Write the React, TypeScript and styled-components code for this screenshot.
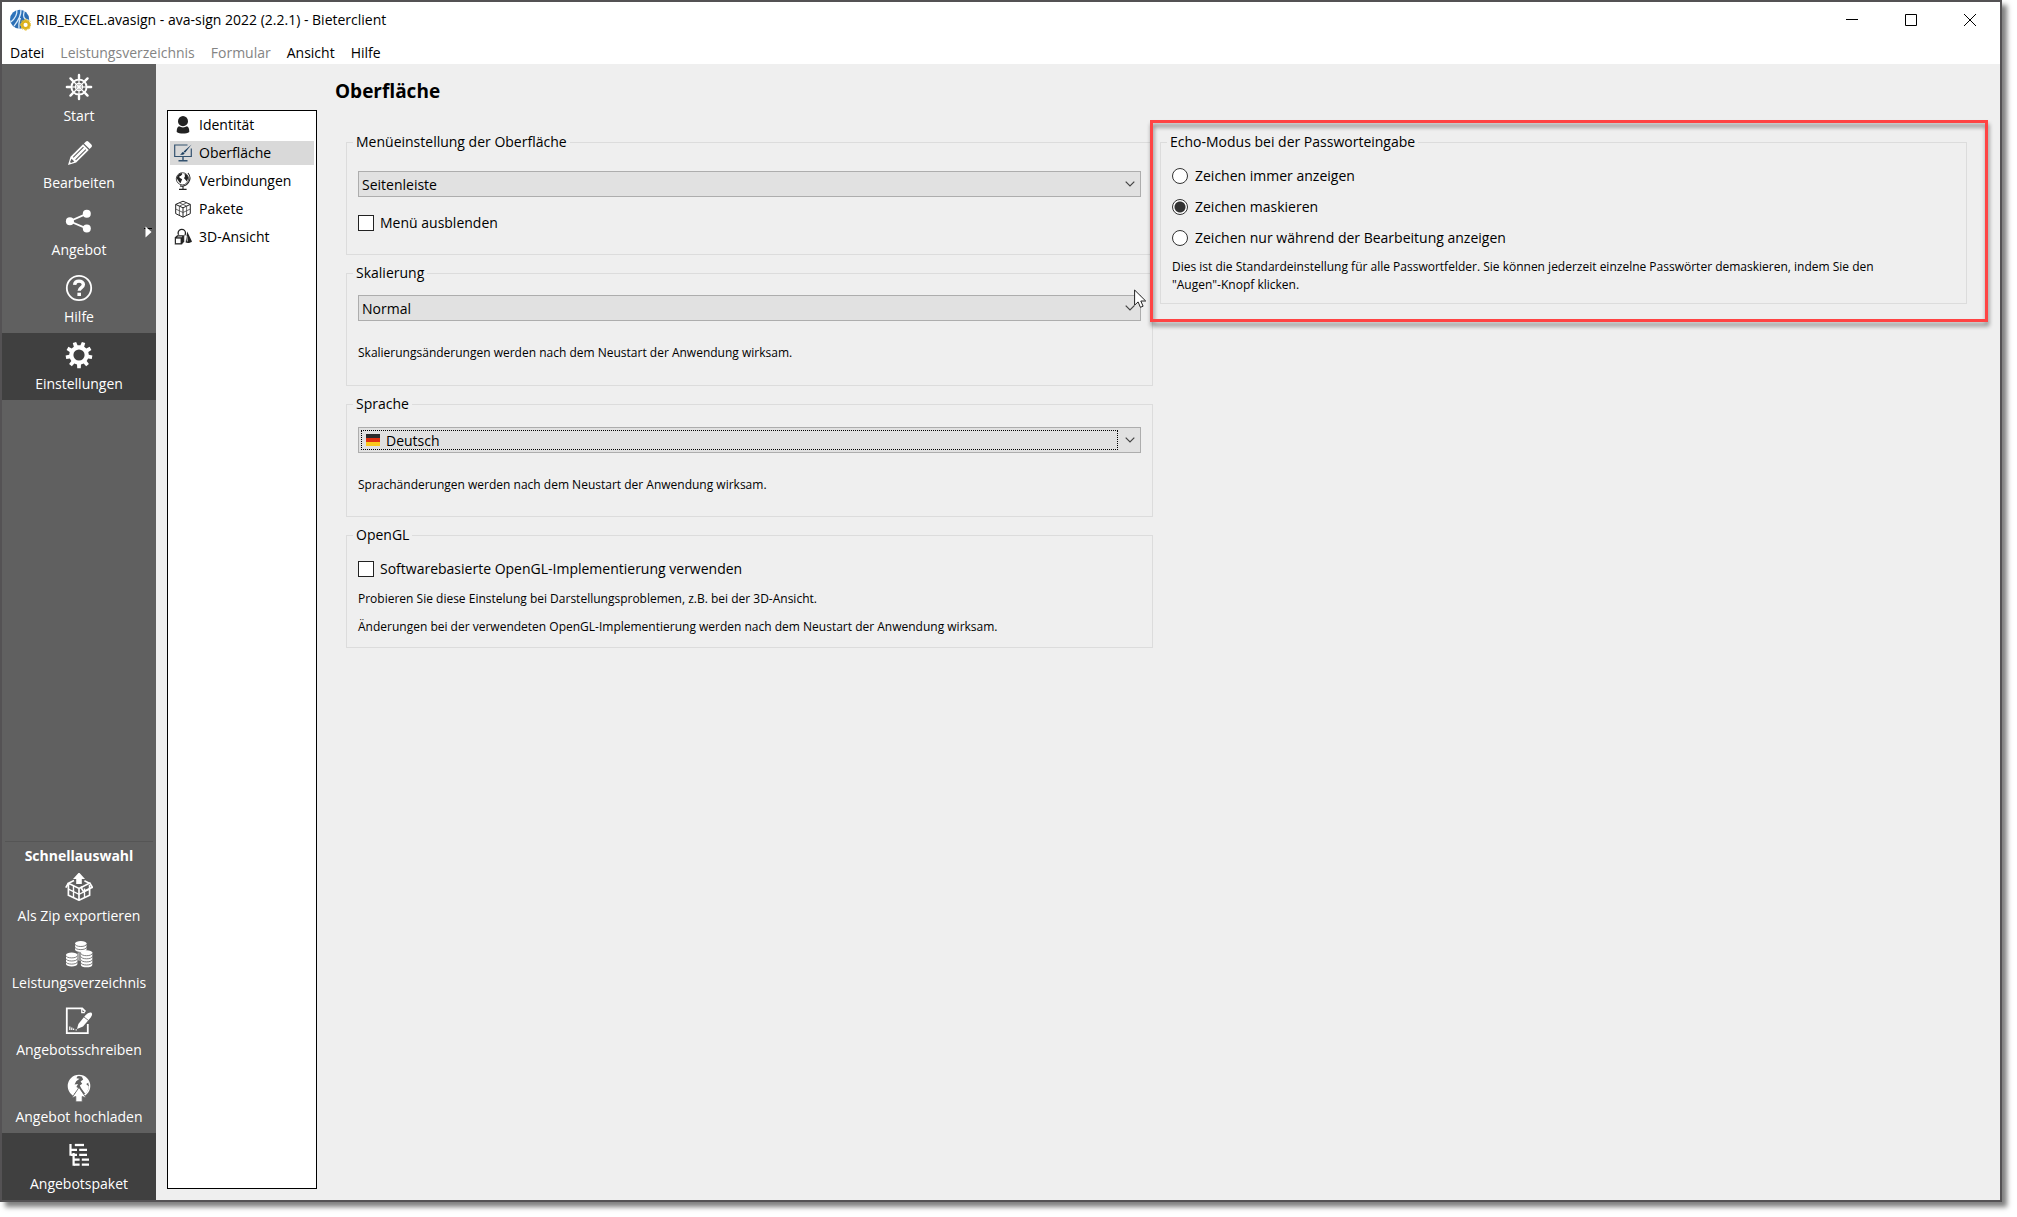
import React from "react";
import styled, { createGlobalStyle } from "styled-components";

const GlobalStyle = createGlobalStyle`
  *, *::before, *::after { box-sizing: border-box; }
  body { margin: 0; background: #fff; }
  body, button, select, input {
    font-family: "Open Sans", "Noto Sans", sans-serif;
    font-size: 14px;
    line-height: 22px;
    color: #000;
  }
`;

const Window = styled.div`
  display: flex;
  flex-direction: column;
  min-height: calc(100vh - 15px);
  margin: 0 15px 15px 0;
  border: 2px solid #545254;
  background: #efefef;
  box-shadow: 5px 5px 5px rgba(0, 0, 0, 0.5);
`;

const TitleBar = styled.header`
  display: flex;
  align-items: center;
  height: 36px;
  padding: 0 1px 0 8px;
  background: #fff;
`;

const Title = styled.h1`
  flex: 1;
  margin: 0 0 0 5px;
  font-size: 14px;
  font-weight: 400;
`;

const WindowButton = styled.button`
  display: grid;
  place-items: center;
  width: 59px;
  height: 36px;
  padding: 0;
  border: 0;
  background: none;
`;

const MenuBar = styled.nav`
  display: flex;
  align-items: flex-end;
  gap: 16px;
  height: 26px;
  padding-left: 8px;
  background: #fff;
`;

const MenuButton = styled.button`
  padding: 0;
  border: 0;
  background: none;
  &:disabled { color: #848484; }
`;

const Body = styled.div`
  flex: 1;
  display: flex;
`;

const Sidebar = styled.nav`
  display: flex;
  flex-direction: column;
  flex: none;
  width: 154px;
  padding-top: 1px;
  background: #606060;
`;

const SideButton = styled.button<{ $active?: boolean }>`
  position: relative;
  display: flex;
  flex-direction: column;
  align-items: center;
  gap: 4px;
  height: 67px;
  padding: 8px 0 0;
  border: 0;
  color: #fff;
  background: ${(p) => (p.$active ? "#404040" : "transparent")};
  white-space: nowrap;
`;

const Flyout = styled.svg`
  position: absolute;
  right: 3px;
  top: 26px;
`;

const QuickHeading = styled.h2`
  margin: auto 3px 0;
  padding-top: 3px;
  height: 24px;
  border-top: 1px solid #555;
  color: #fff;
  font-size: 14px;
  line-height: 22px;
  font-weight: 700;
  text-align: center;
`;

const PageList = styled.ul`
  flex: none;
  display: flex;
  flex-direction: column;
  gap: 4px;
  width: 150px;
  margin: 46px 0 11px 11px;
  padding: 2px;
  border: 1px solid #000;
  background: #fff;
  list-style: none;
`;

const PageButton = styled.button<{ $active?: boolean }>`
  display: flex;
  align-items: center;
  gap: 7px;
  width: 100%;
  height: 24px;
  padding: 0 4px;
  border: 0;
  background: ${(p) => (p.$active ? "#d9d9d9" : "transparent")};
`;

const Content = styled.main`
  flex: 1;
  min-width: 0;
  padding: 14px 33px 0 18px;
`;

const Heading = styled.h2`
  margin: 0 0 27px;
  font-size: 19px;
  line-height: 26px;
  font-weight: 700;
`;

const Columns = styled.div`
  display: grid;
  grid-template-columns: 1fr 1fr;
  gap: 7px;
  align-items: start;
  padding-left: 11px;
`;

const Column = styled.div`
  display: flex;
  flex-direction: column;
  gap: 7px;
`;

const Group = styled.fieldset<{ $top?: number }>`
  min-width: 0;
  min-height: 124px;
  margin: 0;
  padding: ${(p) => p.$top ?? 11}px 11px 9px;
  border: 1px solid #dcdcdc;
`;

const Legend = styled.legend`
  margin-left: -5px;
  padding: 0 3px;
`;

const SelectBox = styled.div`
  position: relative;
`;

const Select = styled.select<{ $withFlag?: boolean }>`
  display: block;
  appearance: none;
  width: 100%;
  height: 26px;
  padding: 1px 24px 0 ${(p) => (p.$withFlag ? 27 : 3)}px;
  border: 1px solid #adadad;
  border-radius: 0;
  background: #e1e1e1;
  outline: 0;
`;

const Chevron = styled.svg`
  position: absolute;
  right: 6px;
  top: 8px;
  pointer-events: none;
`;

const FocusFrame = styled.span`
  position: absolute;
  inset: 3px 23px 3px 3px;
  border: 1px dotted #000;
  pointer-events: none;
`;

const FlagSlot = styled.svg`
  position: absolute;
  left: 8px;
  top: 7px;
  pointer-events: none;
`;

const Pointer = styled.svg`
  position: absolute;
  right: -6px;
  top: -6px;
  pointer-events: none;
`;

const Option = styled.label`
  display: flex;
  align-items: center;
  gap: 6px;
  height: 22px;
`;

const CheckBox = styled.input`
  appearance: none;
  flex: none;
  width: 16px;
  height: 16px;
  margin: 0;
  border: 1px solid #222;
  background: #fff;
`;

const Radio = styled(CheckBox)`
  margin-right: 1px;
  border-color: #333;
  border-radius: 50%;
  &:checked { background: radial-gradient(circle, #333 5px, #fff 6px); }
`;

const ToggleRow = styled.div`
  padding-top: 15px;
`;

const RadioList = styled.div`
  display: flex;
  flex-direction: column;
  gap: 9px;
`;

const Note = styled.p<{ $gap: number }>`
  margin: ${(p) => p.$gap}px 0 0;
  font-size: 12px;
  line-height: 18px;
`;

const NoBreak = styled.span`
  white-space: nowrap;
`;

const Highlighted = styled.div`
  position: relative;
`;

const Marker = styled.div`
  position: absolute;
  inset: -11px -21px -18px -10px;
  border: 3px solid #ff4444;
  filter: drop-shadow(1px 4px 2px rgba(0, 0, 0, 0.45));
  pointer-events: none;
`;

/* ---------- icons ---------- */

const Svg28 = ({ children }: { children: React.ReactNode }) => (
  <svg width="28" height="28" viewBox="0 0 28 28" fill="none" stroke="#fff" strokeWidth="1.6" aria-hidden="true">
    {children}
  </svg>
);

const spokes = Array.from({ length: 8 }, (_, i) => i * 45);

const WheelIcon = () => (
  <Svg28>
    <circle cx="14" cy="14" r="7.6" strokeWidth="2" />
    <circle cx="14" cy="14" r="3.6" strokeWidth="1.2" />
    <circle cx="14" cy="14" r="1.4" fill="#fff" stroke="none" />
    {spokes.map((a) => (
      <g key={a} transform={`rotate(${a} 14 14)`}>
        <path d="M14 13V3" strokeWidth="1.2" />
        <path d="M14 5V1.9" strokeWidth="2.4" strokeLinecap="round" />
      </g>
    ))}
  </Svg28>
);

const PencilIcon = () => (
  <Svg28>
    <g transform="rotate(45 14 14)" stroke="none">
      <path d="M10 .5Q10-1.5 12-1.5h4Q18-1.5 18 .5V3H10z" fill="#fff" />
      <path d="M10 4.2h8V22l-4 7.5L10 22z" fill="#fff" />
      <path d="M12.3 6v14.5M15.7 6v14.5" stroke="#606060" strokeWidth="1" />
      <path d="M12 22.6h4l-1.4 3.4h-1.2z" fill="#606060" />
    </g>
  </Svg28>
);

const ShareIcon = () => (
  <Svg28>
    <path d="M22 6.6 4.7 14.3 22 21.6" strokeWidth="1.8" />
    <g fill="#fff" stroke="none">
      <circle cx="4.9" cy="14.3" r="4" />
      <circle cx="21.8" cy="6.8" r="4" />
      <circle cx="21.8" cy="21.6" r="4" />
    </g>
  </Svg28>
);

const HelpIcon = () => (
  <Svg28>
    <circle cx="14" cy="14" r="12.2" strokeWidth="1.8" />
    <path d="M9.6 10.800c.2-2.400 2-3.700 4.400-3.700s4.400 1.300 4.400 3.500c0 3-4.200 3-4.200 6.200" strokeWidth="3.400" />
    <path d="M14.200 18.700v3.300" strokeWidth="3.600" />
  </Svg28>
);

const gearPath = (teeth: number, c: number, outer: number, root: number, phase: number) => {
  const step = (Math.PI * 2) / teeth;
  const points: string[] = [];
  for (let i = 0; i < teeth; i++) {
    const a = i * step + phase;
    [[-0.29, root], [-0.19, outer], [0.19, outer], [0.29, root]].forEach(([f, r]) => {
      const t = a + f * step;
      points.push(`${(c + r * Math.sin(t)).toFixed(2)} ${(c - r * Math.cos(t)).toFixed(2)}`);
    });
  }
  return `M${points.join("L")}Z`;
};

const GearIcon = () => (
  <Svg28>
    <path
      fill="#fff"
      stroke="none"
      fillRule="evenodd"
      d={`${gearPath(9, 14, 13.4, 9.8, Math.PI / 9)}M14 8.400a5.600 5.600 0 1 0 0 11.200a5.600 5.600 0 1 0 0-11.200Z`}
    />
  </Svg28>
);

const ExportIcon = () => (
  <Svg28>
    <path d="M14-.6 20 6h-3.200v5h-5.600V6H8z" fill="#fff" stroke="none" />
    <path d="M9 7.600 3.400 10.300v11.900L14 27.200l10.600-5V12M14 15.800V27M3.400 10.300 14 15.400l3.500-1.600M19.400 7.800l5 2.500" strokeWidth="1.700" />
    <path d="M3.400 16.200 14 21.300l10.600-5.100M8.500 12.800v11.700M19.500 15.600v9" strokeWidth="1.400" />
    <path d="M3.400 10.300.8 14.600M16 14.500l8.800-4.400 2.600 4.200-9 4.200z" strokeWidth="1.700" />
  </Svg28>
);

const CoinStack = ({ x, y, n }: { x: number; y: number; n: number }) => (
  <g stroke="none">
    <path d={`M${x - 5.7} ${y}v${n * 3.1}a5.700 2.300 0 0 0 11.400 0V${y}z`} fill="#fff" />
    <ellipse cx={x} cy={y} rx="5.7" ry="2.3" fill="#fff" />
    {Array.from({ length: n }, (_, i) => (
      <path
        key={i}
        d={`M${x - 5.7} ${y + 0.8 + i * 3.1}a5.700 2.300 0 0 0 11.400 0`}
        fill="none"
        stroke="#606060"
        strokeWidth="0.8"
      />
    ))}
  </g>
);

const CoinsIcon = () => (
  <Svg28>
    <path d="M13.2 12.500v8M15 12v9" strokeWidth="0.7" />
    <CoinStack x={15.8} y={3.4} n={2} />
    <CoinStack x={6.7} y={14.8} n={3} />
    <CoinStack x={21.6} y={12.6} n={4} />
  </Svg28>
);

const LetterIcon = () => (
  <Svg28>
    <path d="M22.800 17v9.200H1.800V1.300h15.400l3.200 3.300" strokeWidth="1.8" />
    <path d="M16.800 1.500v4.200h3" strokeWidth="1.3" />
    <path d="M12 22l1.400-5L20.500 8.200c1.800-2 4.800-3.600 6-2.400s.4 3-.8 4.600L18 19.400z" fill="#fff" stroke="none" />
    <path d="M18.800 9.900l4.600 3.500" stroke="#606060" strokeWidth="0.8" />
    <path d="M4.800 23v-3.600M6.800 23v-2.400M8.600 23v-1.400M10.600 22.800h1.200" strokeWidth="1.2" />
  </Svg28>
);

const UploadIcon = () => (
  <Svg28>
    <circle cx="14" cy="12" r="10.6" strokeWidth="1.4" />
    <path
      d="M3.700 12C3.600 6.500 7.800 2.300 12.500 1.800l-1 2.400 3 .6-3.300 2.400-1.600 3.400 3.400-.6-1.600 3 2.600 1.400L8 21C5.500 19 3.800 16 3.700 12zM16.500 2c3.600.6 6.400 3.400 7.300 6.600l-2.600 1.400 2.600 2.400c-.2 3-1.600 5.800-3.600 7.400l-3.800-5.400-1.600-3 2.400-1.600-1.600-2.200 2.600-2z"
      fill="#fff"
      stroke="none"
    />
    <path d="M14 13.400 21.200 24l-4-1.600v5.400h-6.400v-5.400L6.800 24z" fill="#fff" stroke="#606060" strokeWidth="0.8" />
  </Svg28>
);

const TreeIcon = () => (
  <Svg28>
    <g strokeWidth="2.3">
      <path d="M5.500 3.100v11.600M8.600 12v12.800" strokeWidth="2.2" />
      <path d="M9.800 4H19" />
      <path d="M6 8.900h6M14.200 8.900H22" />
      <path d="M6 13.900h6M14.200 13.900H22" />
      <path d="M9 18.600h5.600M16.800 18.600H24" />
      <path d="M9 23.700h5.600M16.800 23.700H24" />
    </g>
  </Svg28>
);

const Svg18 = ({ children }: { children: React.ReactNode }) => (
  <svg width="18" height="18" viewBox="0 0 18 18" fill="none" stroke="#222" aria-hidden="true">
    {children}
  </svg>
);

const PersonIcon = () => (
  <Svg18>
    <path d="M9 0a5 5.300 0 0 1 5 5.300c0 2.700-2.200 4.900-5 4.900S4 8 4 5.300A5 5.300 0 0 1 9 0z" fill="#222" stroke="none" />
    <path d="M5 10.300c2.500 1.500 5.500 1.500 8 0 1.500.7 2.300 2.200 2.300 5.700-3 2-9.600 2-12.600 0 0-3.500.8-5 2.300-5.700z" fill="#222" stroke="none" />
  </Svg18>
);

const ScreenIcon = () => (
  <Svg18>
    <path d="M13.500 1H.7v11.500h16.600V4.500" stroke="#33526f" strokeWidth="1.2" />
    <path d="M9 13v3M4.500 16.800h9" stroke="#33526f" strokeWidth="1.4" />
    <path d="M17.600.4 11 8.700 9.600 7.500zM9 7.900l1.600 1.300c-.5 1.500-2.500 2-4.800 1.400 1.500-.4 1.700-2.200 3.200-2.700z" fill="#1c3f60" stroke="none" />
  </Svg18>
);

const GlobeIcon = () => (
  <Svg18>
    <circle cx="8.4" cy="6.800" r="6.100" strokeWidth="0.8" />
    <path
      d="M2.600 6.400C3 3.800 5 1.700 7.400 1.100l1 .9L7 3.800l-1.800.7.4 1.300 2.600 1.400-.9 2-.7 2C4.600 10 4.400 8 2.600 6.400zM10.400 1.500c2 .6 3.400 2.200 3.900 4.300l-1.500 3.800-1.300-1.800-1.500-1.600 1-1.900z"
      fill="#222"
      stroke="none"
    />
    <path d="M14 1a8 8 0 0 1-8 12.900M9 14.500V17M5 17.400h7.600" strokeWidth="1.1" />
  </Svg18>
);

const CubeIcon = () => (
  <Svg18>
    <path d="M9 1.200 16.300 4.400v9.200L9 17.200l-7.300-3.600V4.400zM1.700 4.400 9 7.800l7.300-3.400M9 7.800v9.400" strokeWidth="1" />
    <path
      d="M5.400 2.800l7.200 3.300v9.300M12.600 2.800 5.400 6.100v9.300M1.700 9 9 12.500 16.300 9"
      strokeWidth="0.8"
      stroke="#444"
    />
  </Svg18>
);

const ShapesIcon = () => (
  <Svg18>
    <circle cx="7.800" cy="5" r="3.700" strokeWidth="1.300" />
    <path d="M13.200 3.600 18 13.400c-1.600 1.500-4.200 1.900-6.400 1z" fill="#222" stroke="none" />
    <path d="M12.700 8l.7 5.400" stroke="#fff" strokeWidth="0.800" />
    <path d="M.6 9.200 3.200 7h7.200v6.800L7.800 16.800H.6z" fill="#222" stroke="#fff" strokeWidth="0.500" />
    <path d="M2 10.600h4.600v4.600H2z" fill="#fff" stroke="none" />
    <path d="M3 9.300l1-.9h4.400l-.9.900z" fill="#fff" stroke="none" />
  </Svg18>
);

const LogoIcon = () => (
  <svg width="21" height="22" viewBox="0 0 21 22" aria-hidden="true">
    <defs>
      <linearGradient id="logoBlue" x1="0" y1="0" x2="1" y2="1">
        <stop offset="0" stopColor="#2a75c0" />
        <stop offset="1" stopColor="#2d68a8" />
      </linearGradient>
    </defs>
    <circle cx="9.600" cy="10.300" r="9.500" fill="url(#logoBlue)" />
    <path d="M6.800.8C7.500 6 5 9.500.8 13M11 .6c.2 6.500-2.500 11-7 16.500M14.300 2c-1.500 5-1 8.500 4.500 9.500M10.500 9c-1.500 3-1.800 6.500-1.500 11" stroke="#d9ebfa" strokeWidth="1.300" fill="none" />
    <circle cx="15.600" cy="15.900" r="3.500" fill="#fff" stroke="#dcb21c" strokeWidth="2.800" />
    <path d={gearPath(8, 15.7, 5.5, 4.3, 0)} fill="none" stroke="#e6c23a" strokeWidth="0.800" />
  </svg>
);

const DropArrow = () => (
  <Chevron width="10" height="10" viewBox="0 0 10 10" fill="none" stroke="#444" strokeWidth="1.200">
    <path d="M.7 2.700 5 7l4.300-4.300" />
  </Chevron>
);

const GermanFlag = () => (
  <FlagSlot width="14" height="12" viewBox="0 0 14 12">
    <path d="M0 0h14v4H0z" fill="#2c2c2c" />
    <path d="M0 4h14v4H0z" fill="#e0300f" />
    <path d="M0 8h14v4H0z" fill="#fbc81c" />
  </FlagSlot>
);

/* ---------- page ---------- */

const mainItems = [
  { label: "Start", icon: <WheelIcon /> },
  { label: "Bearbeiten", icon: <PencilIcon /> },
  { label: "Angebot", icon: <ShareIcon />, flyout: true },
  { label: "Hilfe", icon: <HelpIcon /> },
  { label: "Einstellungen", icon: <GearIcon />, active: true },
];

const quickItems = [
  { label: "Als Zip exportieren", icon: <ExportIcon /> },
  { label: "Leistungsverzeichnis", icon: <CoinsIcon /> },
  { label: "Angebotsschreiben", icon: <LetterIcon /> },
  { label: "Angebot hochladen", icon: <UploadIcon /> },
  { label: "Angebotspaket", icon: <TreeIcon />, active: true },
];

const pages = [
  { label: "Identität", icon: <PersonIcon /> },
  { label: "Oberfläche", icon: <ScreenIcon />, active: true },
  { label: "Verbindungen", icon: <GlobeIcon /> },
  { label: "Pakete", icon: <CubeIcon /> },
  { label: "3D-Ansicht", icon: <ShapesIcon /> },
];

const menus = [
  { label: "Datei" },
  { label: "Leistungsverzeichnis", disabled: true },
  { label: "Formular", disabled: true },
  { label: "Ansicht" },
  { label: "Hilfe" },
];

const echoModes = [
  "Zeichen immer anzeigen",
  "Zeichen maskieren",
  "Zeichen nur während der Bearbeitung anzeigen",
];

export default function App() {
  return (
    <>
      <GlobalStyle />
      <Window>
        <TitleBar>
          <LogoIcon />
          <Title>RIB_EXCEL.avasign - ava-sign 2022 (2.2.1) - Bieterclient</Title>
          <WindowButton aria-label="Minimieren">
            <svg width="12" height="12" stroke="#000"><path d="M0 5.500h12" /></svg>
          </WindowButton>
          <WindowButton aria-label="Maximieren">
            <svg width="12" height="12" stroke="#000" fill="none"><path d="M.5.5h11v11H.5z" /></svg>
          </WindowButton>
          <WindowButton aria-label="Schließen">
            <svg width="12" height="12" stroke="#000"><path d="M0 0l12 12M12 0 0 12" /></svg>
          </WindowButton>
        </TitleBar>
        <MenuBar>
          {menus.map((m) => (
            <MenuButton key={m.label} disabled={m.disabled}>{m.label}</MenuButton>
          ))}
        </MenuBar>
        <Body>
          <Sidebar>
            {mainItems.map((item) => (
              <SideButton key={item.label} $active={item.active}>
                {item.icon}
                {item.label}
                {item.flyout && (
                  <Flyout width="9" height="14" viewBox="0 0 9 14">
                    <path d="M0 3.500h8" stroke="#000" />
                    <path d="M1.500 1.500 7.500 7l-6 5.500z" fill="#fff" />
                  </Flyout>
                )}
              </SideButton>
            ))}
            <QuickHeading>Schnellauswahl</QuickHeading>
            {quickItems.map((item) => (
              <SideButton key={item.label} $active={item.active}>
                {item.icon}
                {item.label}
              </SideButton>
            ))}
          </Sidebar>
          <PageList>
            {pages.map((page) => (
              <li key={page.label}>
                <PageButton $active={page.active}>
                  {page.icon}
                  {page.label}
                </PageButton>
              </li>
            ))}
          </PageList>
          <Content>
            <Heading>Oberfläche</Heading>
            <Columns>
              <Column>
                <Group $top={18}>
                  <Legend>Menüeinstellung der Oberfläche</Legend>
                  <SelectBox>
                    <Select aria-label="Menüeinstellung der Oberfläche">
                      <option>Seitenleiste</option>
                    </Select>
                    <DropArrow />
                  </SelectBox>
                  <ToggleRow>
                    <Option>
                      <CheckBox type="checkbox" />
                      Menü ausblenden
                    </Option>
                  </ToggleRow>
                </Group>
                <Group>
                  <Legend>Skalierung</Legend>
                  <SelectBox>
                    <Select aria-label="Skalierung">
                      <option>Normal</option>
                    </Select>
                    <DropArrow />
                    <Pointer width="13" height="20" viewBox="0 0 13 20">
                      <path d="M.6 1v15.200l3.500-3.300 2.300 5.400 2.700-1.100-2.300-5.200h4.900z" fill="#fff" stroke="#222" />
                    </Pointer>
                  </SelectBox>
                  <Note $gap={23}>Skalierungsänderungen werden nach dem Neustart der Anwendung wirksam.</Note>
                </Group>
                <Group $top={12}>
                  <Legend>Sprache</Legend>
                  <SelectBox>
                    <Select aria-label="Sprache" $withFlag>
                      <option>Deutsch</option>
                    </Select>
                    <FocusFrame />
                    <GermanFlag />
                    <DropArrow />
                  </SelectBox>
                  <Note $gap={23}>Sprachänderungen werden nach dem Neustart der Anwendung wirksam.</Note>
                </Group>
                <Group $top={12}>
                  <Legend>OpenGL</Legend>
                  <Option>
                    <CheckBox type="checkbox" />
                    Softwarebasierte OpenGL-Implementierung verwenden
                  </Option>
                  <Note $gap={10}>Probieren Sie diese Einstelung bei Darstellungsproblemen, z.B. bei der 3D-Ansicht.</Note>
                  <Note $gap={10}>Änderungen bei der verwendeten OpenGL-Implementierung werden nach dem Neustart der Anwendung wirksam.</Note>
                </Group>
              </Column>
              <Highlighted>
                <Group $top={12}>
                  <Legend>Echo-Modus bei der Passworteingabe</Legend>
                  <RadioList>
                    {echoModes.map((mode, i) => (
                      <Option key={mode}>
                        <Radio type="radio" name="echo" defaultChecked={i === 1} />
                        {mode}
                      </Option>
                    ))}
                  </RadioList>
                  <Note $gap={9}>
                    Dies ist die Standardeinstellung für alle Passwortfelder. Sie können jederzeit einzelne Passwörter
                    demaskieren, indem Sie den <NoBreak>"Augen"-Knopf klicken.</NoBreak>
                  </Note>
                </Group>
                <Marker />
              </Highlighted>
            </Columns>
          </Content>
        </Body>
      </Window>
    </>
  );
}
